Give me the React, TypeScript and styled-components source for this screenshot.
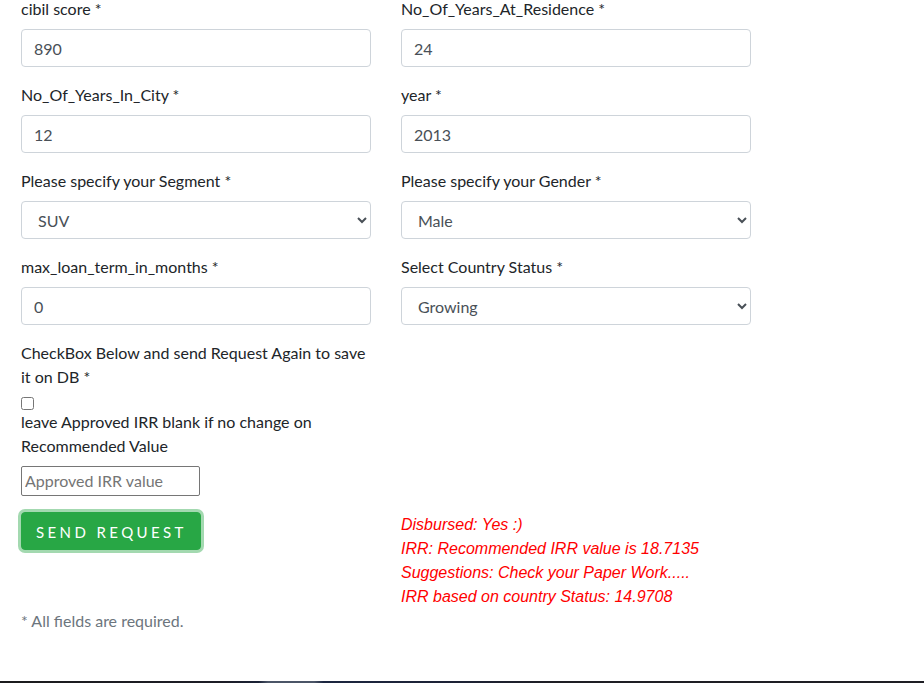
import React from 'react'
import styled, { createGlobalStyle } from 'styled-components'

const GlobalStyle = createGlobalStyle`
  html, body {
    margin: 0;
    padding: 0;
    background: #fff;
  }
  body {
    font-family: Lato, "Open Sans", "Liberation Sans", sans-serif;
    font-size: 16px;
    line-height: 1.5;
    color: #212529;
    overflow: hidden;
  }
  * {
    box-sizing: border-box;
  }
`

const Page = styled.div`
  margin-top: -3px;
`

const FormWrap = styled.form`
  width: 766px;
  padding-left: 21px;
  padding-right: 15px;
`

const Grid = styled.div`
  display: grid;
  grid-template-columns: 350px 350px;
  column-gap: 30px;
`

const Group = styled.div`
  margin-bottom: 16px;
`

const Label = styled.label`
  display: block;
  margin-bottom: 8px;
`

const TextInput = styled.input`
  display: block;
  width: 100%;
  height: 38px;
  padding: 6px 12px;
  font-family: inherit;
  font-size: 16px;
  line-height: 1.5;
  color: #495057;
  background: #fff;
  border: 1px solid #ced4da;
  border-radius: 4px;
  outline: none;
`

const Select = styled.select`
  display: block;
  width: 100%;
  height: 38px;
  padding: 6px 8px 6px 12px;
  font-family: inherit;
  font-size: 16px;
  line-height: 1.5;
  color: #495057;
  background: #fff;
  border: 1px solid #ced4da;
  border-radius: 4px;
  outline: none;
`

const Check = styled.input`
  display: block;
  width: 13px;
  height: 13px;
  margin: 0;
`

const Hint = styled.div`
  margin-bottom: 8px;
`

const IrrInput = styled.input`
  display: block;
  width: 179px;
  height: 30px;
  padding: 0 3px 1px;
  font-family: inherit;
  font-size: 16px;
  border: 1px solid #767676;
  border-radius: 2px;
  color: #212529;
  &::placeholder {
    color: #757575;
  }
`

const SendButton = styled.button`
  display: inline-block;
  height: 38px;
  padding: 7px 13px 5px 14px;
  font-family: inherit;
  font-size: 15px;
  letter-spacing: 3.4px;
  color: #fff;
  background: #28a745;
  border: 1px solid #28a745;
  border-radius: 4px;
  box-shadow: 0 0 0 3px rgba(72, 180, 97, 0.5);
`

const Result = styled.div`
  padding-top: 1px;
  font-family: "Liberation Sans", Arial, sans-serif;
  font-style: italic;
  font-size: 16px;
  line-height: 24px;
  color: #ff0000;
`

const Note = styled.p`
  margin: 0;
  font-size: 16px;
  color: #6c757d;
`

const Footer = styled.footer`
  margin-top: 48px;
  height: 200px;
  background: linear-gradient(
    90deg,
    #1b1b1d 0%,
    #1c1d26 24%,
    #1a2236 28%,
    #4b5567 29%,
    #4b5567 34%,
    #1b2640 35%,
    #1d2235 50%,
    #1e1e24 60%,
    #1e1e24 100%
  );
`

interface Field {
  label: string
  value: string
  options?: string[]
}

const fields: Field[] = [
  { label: 'cibil score', value: '890' },
  { label: 'No_Of_Years_At_Residence', value: '24' },
  { label: 'No_Of_Years_In_City', value: '12' },
  { label: 'year', value: '2013' },
  { label: 'Please specify your Segment', value: 'SUV', options: ['SUV', 'Sedan', 'Hatchback'] },
  { label: 'Please specify your Gender', value: 'Male', options: ['Male', 'Female'] },
  { label: 'max_loan_term_in_months', value: '0' },
  { label: 'Select Country Status', value: 'Growing', options: ['Growing', 'Developed', 'Developing'] },
]

const results = [
  'Disbursed: Yes :)',
  'IRR: Recommended IRR value is 18.7135',
  'Suggestions: Check your Paper Work.....',
  'IRR based on country Status: 14.9708',
]

export default function App() {
  return (
    <Page>
      <GlobalStyle />
      <FormWrap onSubmit={(e) => e.preventDefault()}>
        <Grid>
          {fields.map((f) => (
            <Group key={f.label}>
              <Label>{f.label} *</Label>
              {f.options ? (
                <Select defaultValue={f.value}>
                  {f.options.map((o) => (
                    <option key={o}>{o}</option>
                  ))}
                </Select>
              ) : (
                <TextInput type="text" defaultValue={f.value} />
              )}
            </Group>
          ))}
          <Group>
            <Label>CheckBox Below and send Request Again to save it on DB *</Label>
            <Check type="checkbox" />
            <Hint>leave Approved IRR blank if no change on Recommended Value</Hint>
            <IrrInput type="text" placeholder="Approved IRR value" />
          </Group>
          <div />
          <div>
            <SendButton type="submit">SEND REQUEST</SendButton>
          </div>
          <Result>
            {results.map((r) => (
              <div key={r}>{r}</div>
            ))}
          </Result>
        </Grid>
        <Note>* All fields are required.</Note>
      </FormWrap>
      <Footer />
    </Page>
  )
}
